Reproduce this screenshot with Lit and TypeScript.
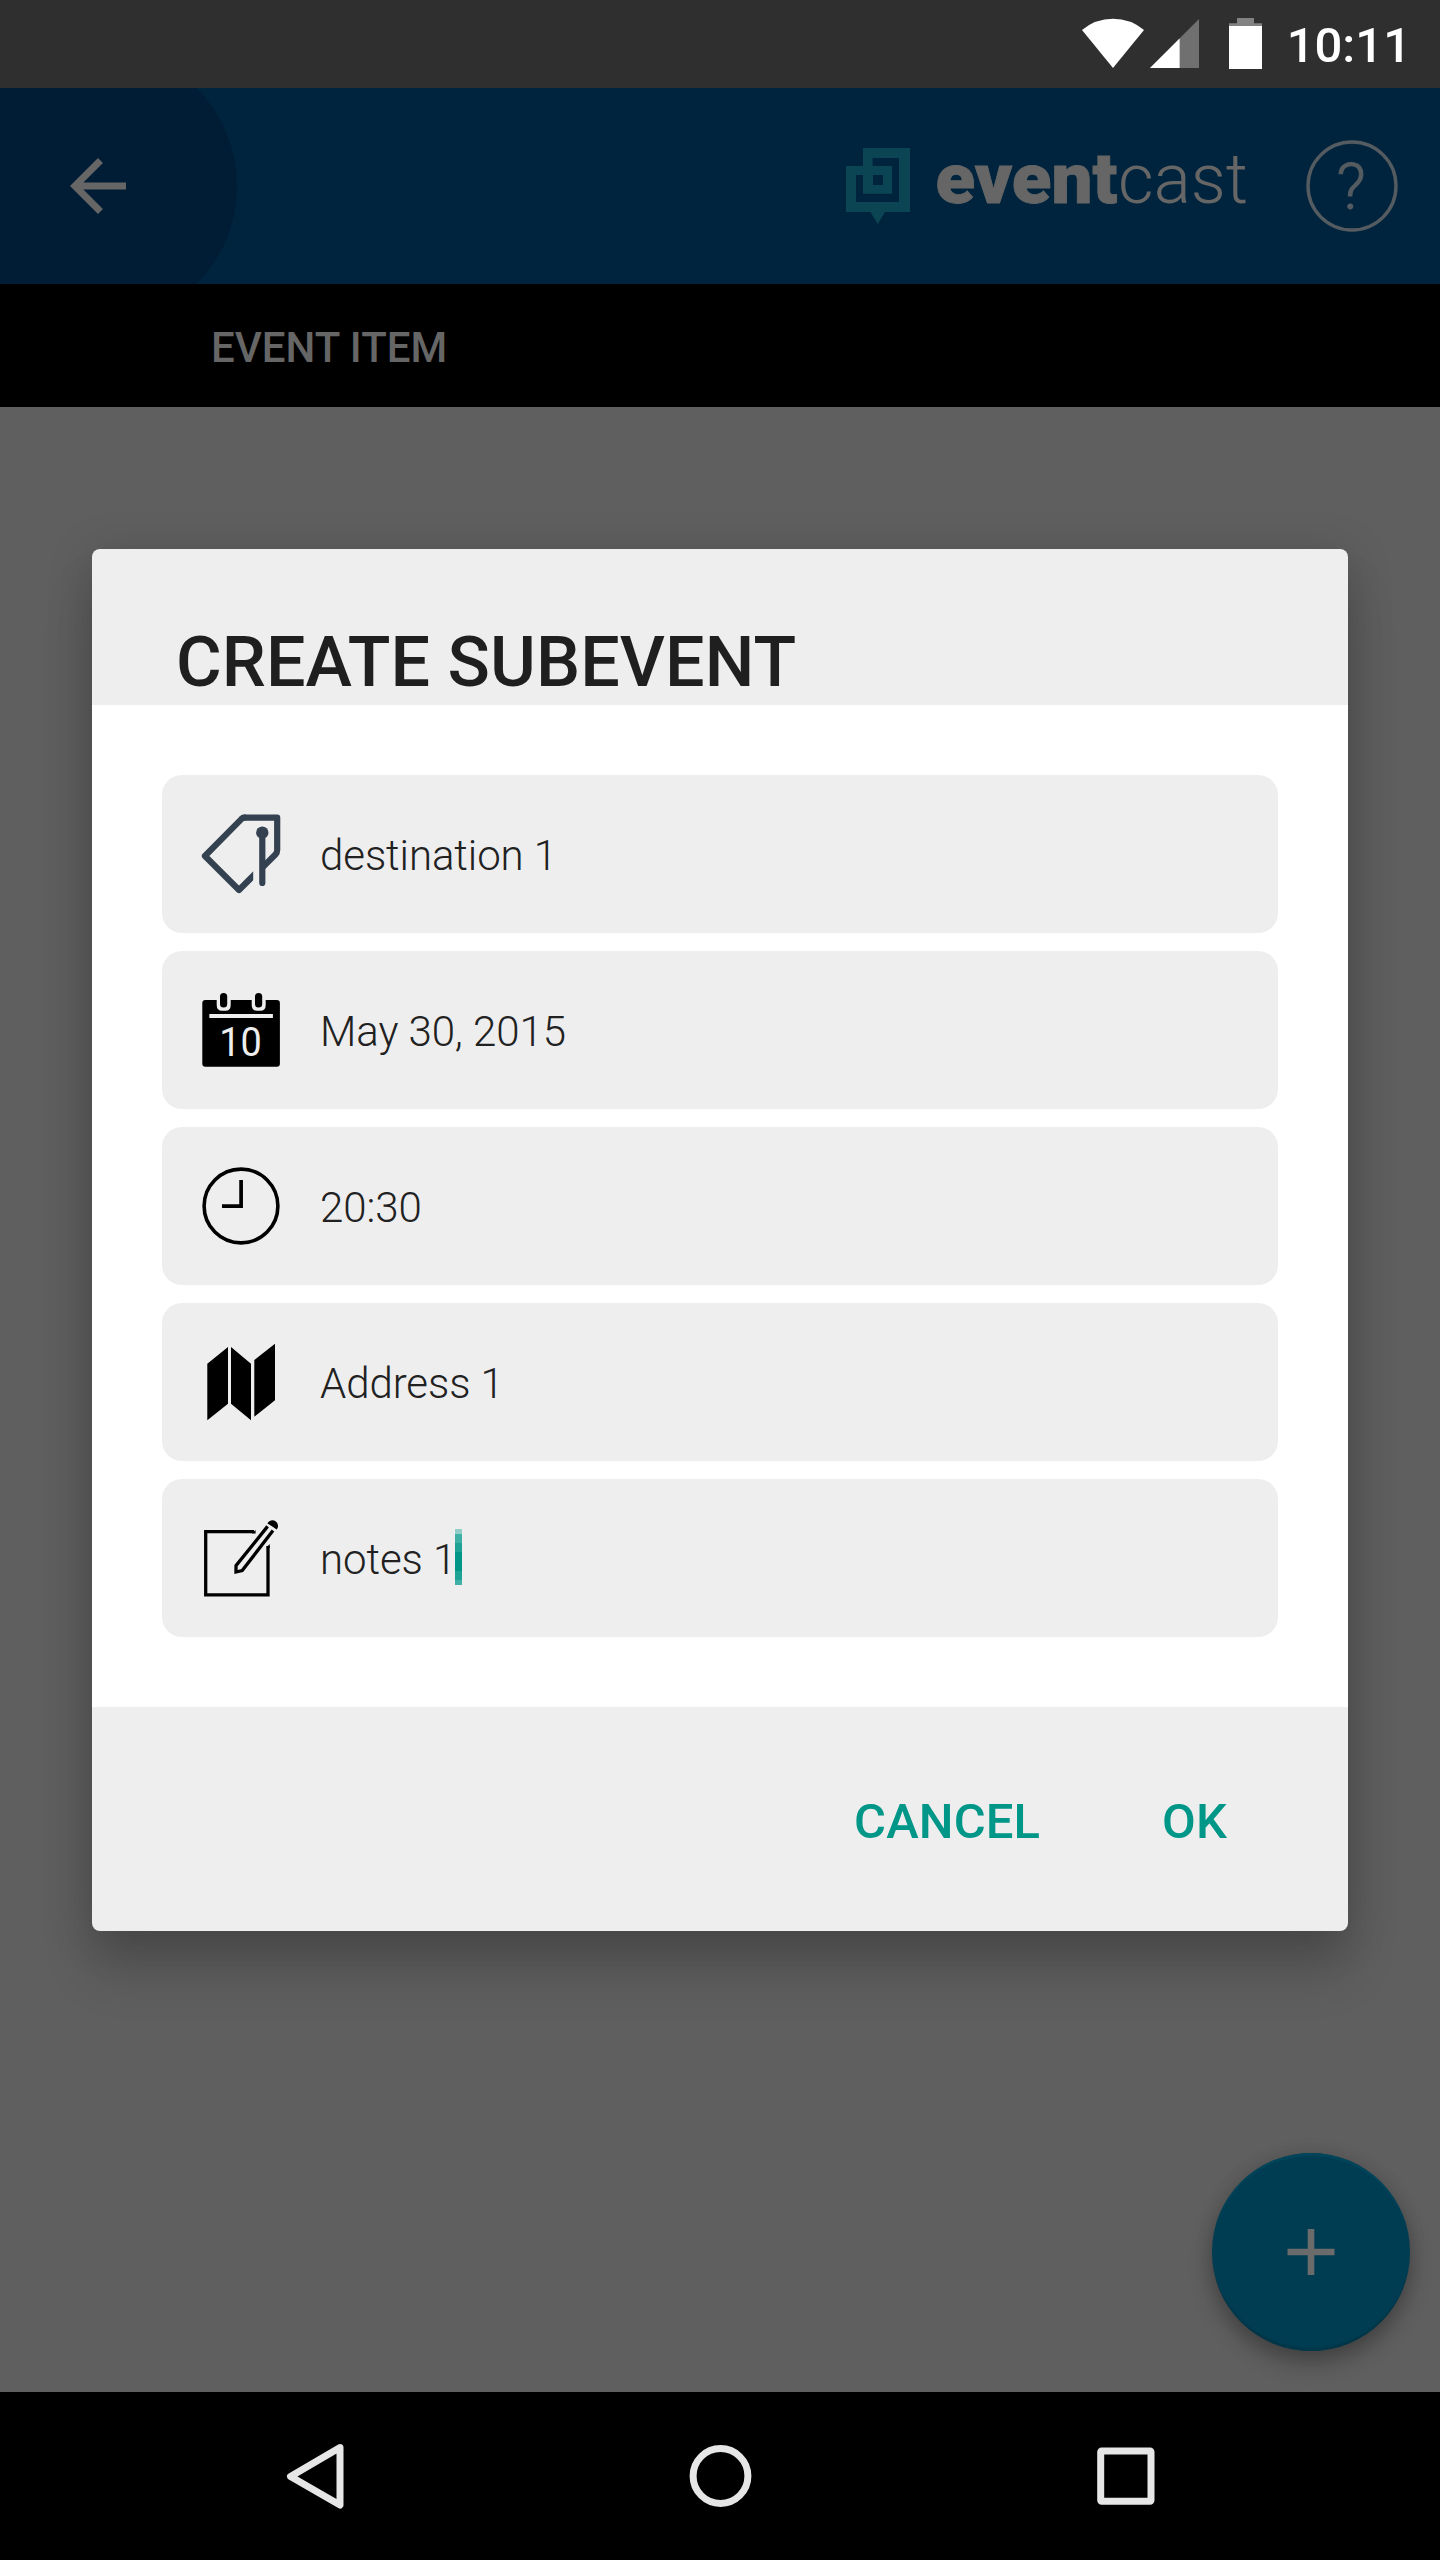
import { LitElement, html, css, svg, TemplateResult } from "lit";
import { customElement, property } from "lit/decorators.js";

const tagIcon = svg`
  <clipPath id="cut"><rect x="-2" y="-2" width="53.2" height="84"/></clipPath>
  <g fill="none" stroke="#344151" stroke-width="6.2" stroke-linejoin="round">
    <path d="M60.3 53.6L73.4 40.5Q75.2 38.6 75.2 36V3.7H42.5Q40.8 3.7 39.6 4.9" />
    <path clip-path="url(#cut)" d="M44 3.7H42.5Q40.8 3.7 39.6 4.9L2.9 42L37 76L56 57" />
    <path d="M60.3 19V69" stroke-linecap="round" />
  </g>
  <circle cx="60.3" cy="18.7" r="6.2" fill="#344151" />`;

const calendarIcon = svg`
  <rect x="0.3" y="10" width="77.6" height="66.8" rx="3" fill="#000" />
  <path d="M14.7 9V15Q14.7 20.800 20 20.800H23.400Q28.700 20.800 28.700 15V9ZM49.700 9V15Q49.700 20.800 55 20.800H58.400Q63.700 20.800 63.700 15V9Z" fill="#eee" />
  <rect x="18" y="3" width="7.2" height="14.6" rx="3.6" />
  <rect x="53" y="3" width="7.2" height="14.6" rx="3.6" />
  <rect x="7.3" y="24" width="63.6" height="4" fill="#eee" />
  <text x="17.3" y="66.300" font-family="Roboto, sans-serif" font-size="40" fill="#eee" textLength="42.500" lengthAdjust="spacingAndGlyphs">10</text>`;

const clockIcon = svg`
  <circle cx="39" cy="40" r="36.9" fill="none" stroke="#000" stroke-width="3.6" />
  <path d="M39.1 14V40.1H20" fill="none" stroke="#000" stroke-width="3.7" />`;

const mapIcon = svg`
  <path d="M5.3 21.7L26 5V61.7L5.3 78.3ZM29 5L49 21.7V78.3L29 61.7ZM52.3 18L73 1.7V58.3L52.3 74.7Z" />`;

const noteIcon = svg`
  <g fill="none" stroke="#000" stroke-width="3.3">
    <path d="M52 13.7H3.7V76.9H66V28" />
    <path d="M65.6 8.4L34 47.6V54L40.2 52.6L71 12.6" />
  </g>
  <path d="M50 15.4H49.8L53.6 12V15.4ZM64.4 29.5L67.7 26V30Z" />
  <path d="M65.4 5.4A5.6 5.6 0 1 1 74.6 11.6Q71 8.8 65.4 5.4Z" />`;

@customElement("form-field")
class FormField extends LitElement {
  @property({ attribute: false }) icon?: TemplateResult;
  @property() value = "";
  @property({ type: Boolean }) focused = false;

  static styles = css`
    :host { display: block; }
    .field {
      display: flex; align-items: center; height: 158px; box-sizing: border-box;
      padding-left: 40px; background: #eee; border-radius: 20px;
    }
    .icon { width: 80px; height: 80px; margin-right: 38px; overflow: visible; flex: none; }
    .value { font: 300 42px/50px Roboto, sans-serif; color: #212121; padding-top: 4px; white-space: pre; letter-spacing: -.08px; }
    .caret {
      width: 7px; height: 56px; margin-left: -1px; margin-top: -2px;
      background: linear-gradient(#93cdc7 0 5px, #3fb0a5 5px 14px, #1ea295 14px 23px, #009688 23px 42px, #1ea295 42px 51px, #3fb0a5 51px);
    }
  `;

  render() {
    return html`<div class="field">
      <svg class="icon" viewBox="0 0 80 80">${this.icon}</svg>
      <span class="value">${this.value}</span>
      ${this.focused ? html`<span class="caret"></span>` : ""}
    </div>`;
  }
}

@customElement("app-root")
class AppRoot extends LitElement {
  static styles = css`
    :host { display: block; font-family: Roboto, sans-serif; }
    .screen {
      position: relative; width: 1440px; height: 2560px; overflow: hidden;
      display: flex; flex-direction: column; background: #5f5f5f;
    }
    .status {
      height: 88px; flex: none; background: #2f2f2f; display: flex;
      justify-content: flex-end; align-items: center; padding-right: 29px; box-sizing: border-box;
    }
    .status-icons { width: 190px; height: 88px; }
    .clock { font-weight: 500; font-size: 49px; line-height: 58px; color: #fff; margin-left: 17px; padding-top: 3px; }
    .appbar {
      height: 196px; flex: none; background: #00243d; display: flex; align-items: center;
      justify-content: space-between; overflow: hidden;
    }
    .back {
      width: 278px; height: 278px; margin-left: -41px; border-radius: 50%; background: #001d35;
      display: flex; align-items: center; justify-content: center; flex: none;
    }
    .back svg { width: 84px; height: 84px; }
    .brand { display: flex; align-items: center; }
    .logo { width: 420px; height: 100px; margin-right: 40px; }
    .help { width: 92px; height: 92px; margin-right: 42px; }
    .tabs {
      height: 123px; flex: none; background: #000; display: flex; align-items: center;
      padding-left: 211px; font-weight: 500; font-size: 42px; color: #666; box-sizing: border-box; padding-top: 3px;
    }
    .content { flex: 1; display: flex; align-items: flex-end; justify-content: flex-end; padding: 0 30px 41px 0; }
    .fab {
      width: 198px; height: 198px; border-radius: 50%; background: #003d52;
      display: flex; align-items: center; justify-content: center;
      box-shadow: inset 0 4px 1px -1px #00455b, inset 0 -4px 1px -1px #003648, 0 12px 22px rgba(0,0,0,.28), 0 0 18px rgba(0,0,0,.1);
    }
    .fab svg { width: 48px; height: 48px; }
    .nav { height: 168px; flex: none; background: #000; }
    .nav svg { display: block; width: 1440px; height: 168px; }
    .dialog {
      position: absolute; left: 92px; top: 549px; width: 1256px; height: 1382px;
      border-radius: 8px; overflow: hidden; display: flex; flex-direction: column; background: #eee;
      box-shadow: 0 42px 50px rgba(0,0,0,.16), 0 6px 46px rgba(0,0,0,.17);
    }
    .title {
      height: 156px; flex: none; box-sizing: border-box; padding: 72px 0 0 84px; margin: 0;
      font-weight: 500; font-size: 70px; line-height: 82px; color: #1f1f1f; white-space: nowrap; letter-spacing: .08px;
    }
    .form { flex: 1; background: #fff; padding: 70px; display: flex; flex-direction: column; gap: 18px; box-sizing: border-box; }
    .actions {
      height: 224px; flex: none; box-sizing: border-box; display: flex; justify-content: flex-end;
      align-items: center; gap: 122px; padding: 5px 121px 0 0;
      font-weight: 500; font-size: 49px; color: #009688; letter-spacing: .1px;
    }
  `;

  render() {
    return html`<div class="screen">
      <div class="status">
        <svg class="status-icons" viewBox="1080 0 190 88">
          <path d="M1113 68L1082 30Q1095.500 18.800 1113 18.800T1144 30Z" fill="#fff" />
          <path d="M1150 68L1199 19V68Z" fill="#707070" />
          <path d="M1150 68L1179.600 38.400V68Z" fill="#fff" />
          <path d="M1229 26V23.300H1237V18H1254V23.300H1262V26Z" fill="#828282" />
          <rect x="1229" y="26" width="33" height="43" fill="#fff" />
        </svg>
        <span class="clock">10:11</span>
      </div>
      <div class="appbar">
        <div class="back">
          <svg viewBox="0 0 24 24"><path fill="#666" d="M20 11H7.830l5.590-5.590L12 4l-8 8 8 8 1.410-1.410L7.830 13H20v-2z" /></svg>
        </div>
        <div class="brand">
          <svg class="logo" viewBox="846 136 420 100">
            <path fill="#0b4452" fill-rule="evenodd" d="M863 148H910V212H885L877.700 224L870.500 212H846V166H863ZM872.600 158V166H892V193.700H863V175H856V202H899V158ZM873 175V185H883V175Z" />
            <text x="935.500" y="203" font-size="71" font-weight="900" fill="#666" stroke="#666" stroke-width=".8" textLength="182" lengthAdjust="spacingAndGlyphs">event</text>
            <text x="1118" y="203" font-size="71" font-weight="300" fill="#666" textLength="130" lengthAdjust="spacingAndGlyphs">cast</text>
          </svg>
          <svg class="help" viewBox="0 0 92 92">
            <circle cx="46" cy="46" r="44" fill="none" stroke="#555c61" stroke-width="3.400" />
            <text x="45" y="69" text-anchor="middle" font-size="65" font-weight="300" fill="#555c61" stroke="#555c61" stroke-width=".8">?</text>
          </svg>
        </div>
      </div>
      <div class="tabs">EVENT ITEM</div>
      <div class="content">
        <div class="fab"><svg viewBox="0 0 48 48"><path d="M24 1V47M.5 24H47.500" stroke="#6b6b6b" stroke-width="6.600" /></svg></div>
      </div>
      <div class="nav">
        <svg viewBox="0 2392 1440 168" fill="none" stroke="#e6e6e6" stroke-linejoin="round">
          <path d="M340 2447.500L290.500 2476.500L340 2505Z" stroke-width="7" />
          <circle cx="720.500" cy="2476" r="27.400" stroke-width="7" />
          <rect x="1100.700" y="2451" width="50.300" height="50.300" rx="1" stroke-width="7" />
        </svg>
      </div>
      <div class="dialog">
        <h1 class="title">CREATE SUBEVENT</h1>
        <div class="form">
          <form-field .icon=${tagIcon} value="destination 1"></form-field>
          <form-field .icon=${calendarIcon} value="May 30, 2015"></form-field>
          <form-field .icon=${clockIcon} value="20:30"></form-field>
          <form-field .icon=${mapIcon} value="Address 1"></form-field>
          <form-field .icon=${noteIcon} value="notes 1" focused></form-field>
        </div>
        <div class="actions"><span>CANCEL</span><span>OK</span></div>
      </div>
    </div>`;
  }
}
